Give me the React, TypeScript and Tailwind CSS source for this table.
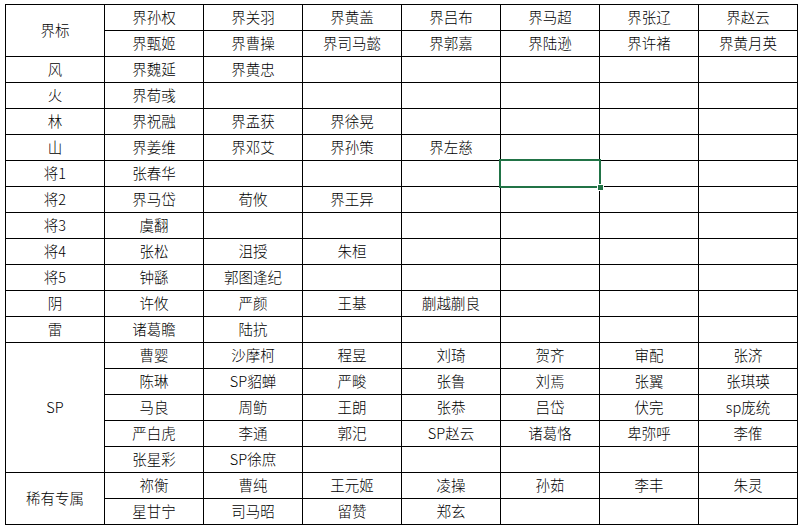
import React from 'react';

type Cell = { text: string; col: number; row: number; rowSpan?: number };

const groups: { label: string; rows: string[][] }[] = [
  {
    label: '界标',
    rows: [
      ['界孙权', '界关羽', '界黄盖', '界吕布', '界马超', '界张辽', '界赵云'],
      ['界甄姬', '界曹操', '界司马懿', '界郭嘉', '界陆逊', '界许褚', '界黄月英'],
    ],
  },
  { label: '风', rows: [['界魏延', '界黄忠']] },
  { label: '火', rows: [['界荀彧']] },
  { label: '林', rows: [['界祝融', '界孟获', '界徐晃']] },
  { label: '山', rows: [['界姜维', '界邓艾', '界孙策', '界左慈']] },
  { label: '将1', rows: [['张春华']] },
  { label: '将2', rows: [['界马岱', '荀攸', '界王异']] },
  { label: '将3', rows: [['虞翻']] },
  { label: '将4', rows: [['张松', '沮授', '朱桓']] },
  { label: '将5', rows: [['钟繇', '郭图逢纪']] },
  { label: '阴', rows: [['许攸', '严颜', '王基', '蒯越蒯良']] },
  { label: '雷', rows: [['诸葛瞻', '陆抗']] },
  {
    label: 'SP',
    rows: [
      ['曹婴', '沙摩柯', '程昱', '刘琦', '贺齐', '审配', '张济'],
      ['陈琳', 'SP貂蝉', '严畯', '张鲁', '刘焉', '张翼', '张琪瑛'],
      ['马良', '周鲂', '王朗', '张恭', '吕岱', '伏完', 'sp庞统'],
      ['严白虎', '李通', '郭汜', 'SP赵云', '诸葛恪', '卑弥呼', '李傕'],
      ['张星彩', 'SP徐庶'],
    ],
  },
  {
    label: '稀有专属',
    rows: [
      ['祢衡', '曹纯', '王元姬', '凌操', '孙茹', '李丰', '朱灵'],
      ['星甘宁', '司马昭', '留赞', '郑玄'],
    ],
  },
];

const rowSpanClass: Record<number, string> = {
  1: 'row-span-1',
  2: 'row-span-2',
  5: 'row-span-5',
};

// flatten the groups into grid cells (empty cells included so the grid lines show)
function buildCells(): Cell[] {
  const cells: Cell[] = [];
  let row = 0;
  for (const g of groups) {
    cells.push({ text: g.label, col: 0, row, rowSpan: g.rows.length });
    g.rows.forEach((r, i) => {
      for (let c = 0; c < 7; c++) {
        cells.push({ text: r[c] ?? '', col: c + 1, row: row + i });
      }
    });
    row += g.rows.length;
  }
  return cells;
}

const App: React.FC = () => {
  const cells = buildCells();

  return (
    <div className="min-h-screen bg-white pt-[4px] pl-[5px]">
      <div
        className="grid w-fit grid-cols-[repeat(8,98px)] grid-rows-[repeat(20,25px)] gap-px border border-black bg-black text-[14.5px] font-light leading-none text-black"
        style={{ fontFamily: '"Noto Sans CJK SC", "Noto Sans", sans-serif' }}
      >
        {cells.map((cell, i) => {
          // 将1 row, 6th column holds the active selection
          const selected = cell.row === 6 && cell.col === 5;
          return (
            <div
              key={i}
              className={`relative flex items-center justify-center bg-white ${rowSpanClass[cell.rowSpan ?? 1]}`}
              style={{ gridColumnStart: cell.col + 1, gridRowStart: cell.row + 1 }}
            >
              {cell.text}
              {selected && (
                <div className="absolute -inset-[2px] z-10 border-2 border-[#217346]">
                  <div className="absolute -right-[5px] -bottom-[5px] h-[7px] w-[7px] border border-white bg-[#217346]" />
                </div>
              )}
            </div>
          );
        })}
      </div>
    </div>
  );
};

export default App;
